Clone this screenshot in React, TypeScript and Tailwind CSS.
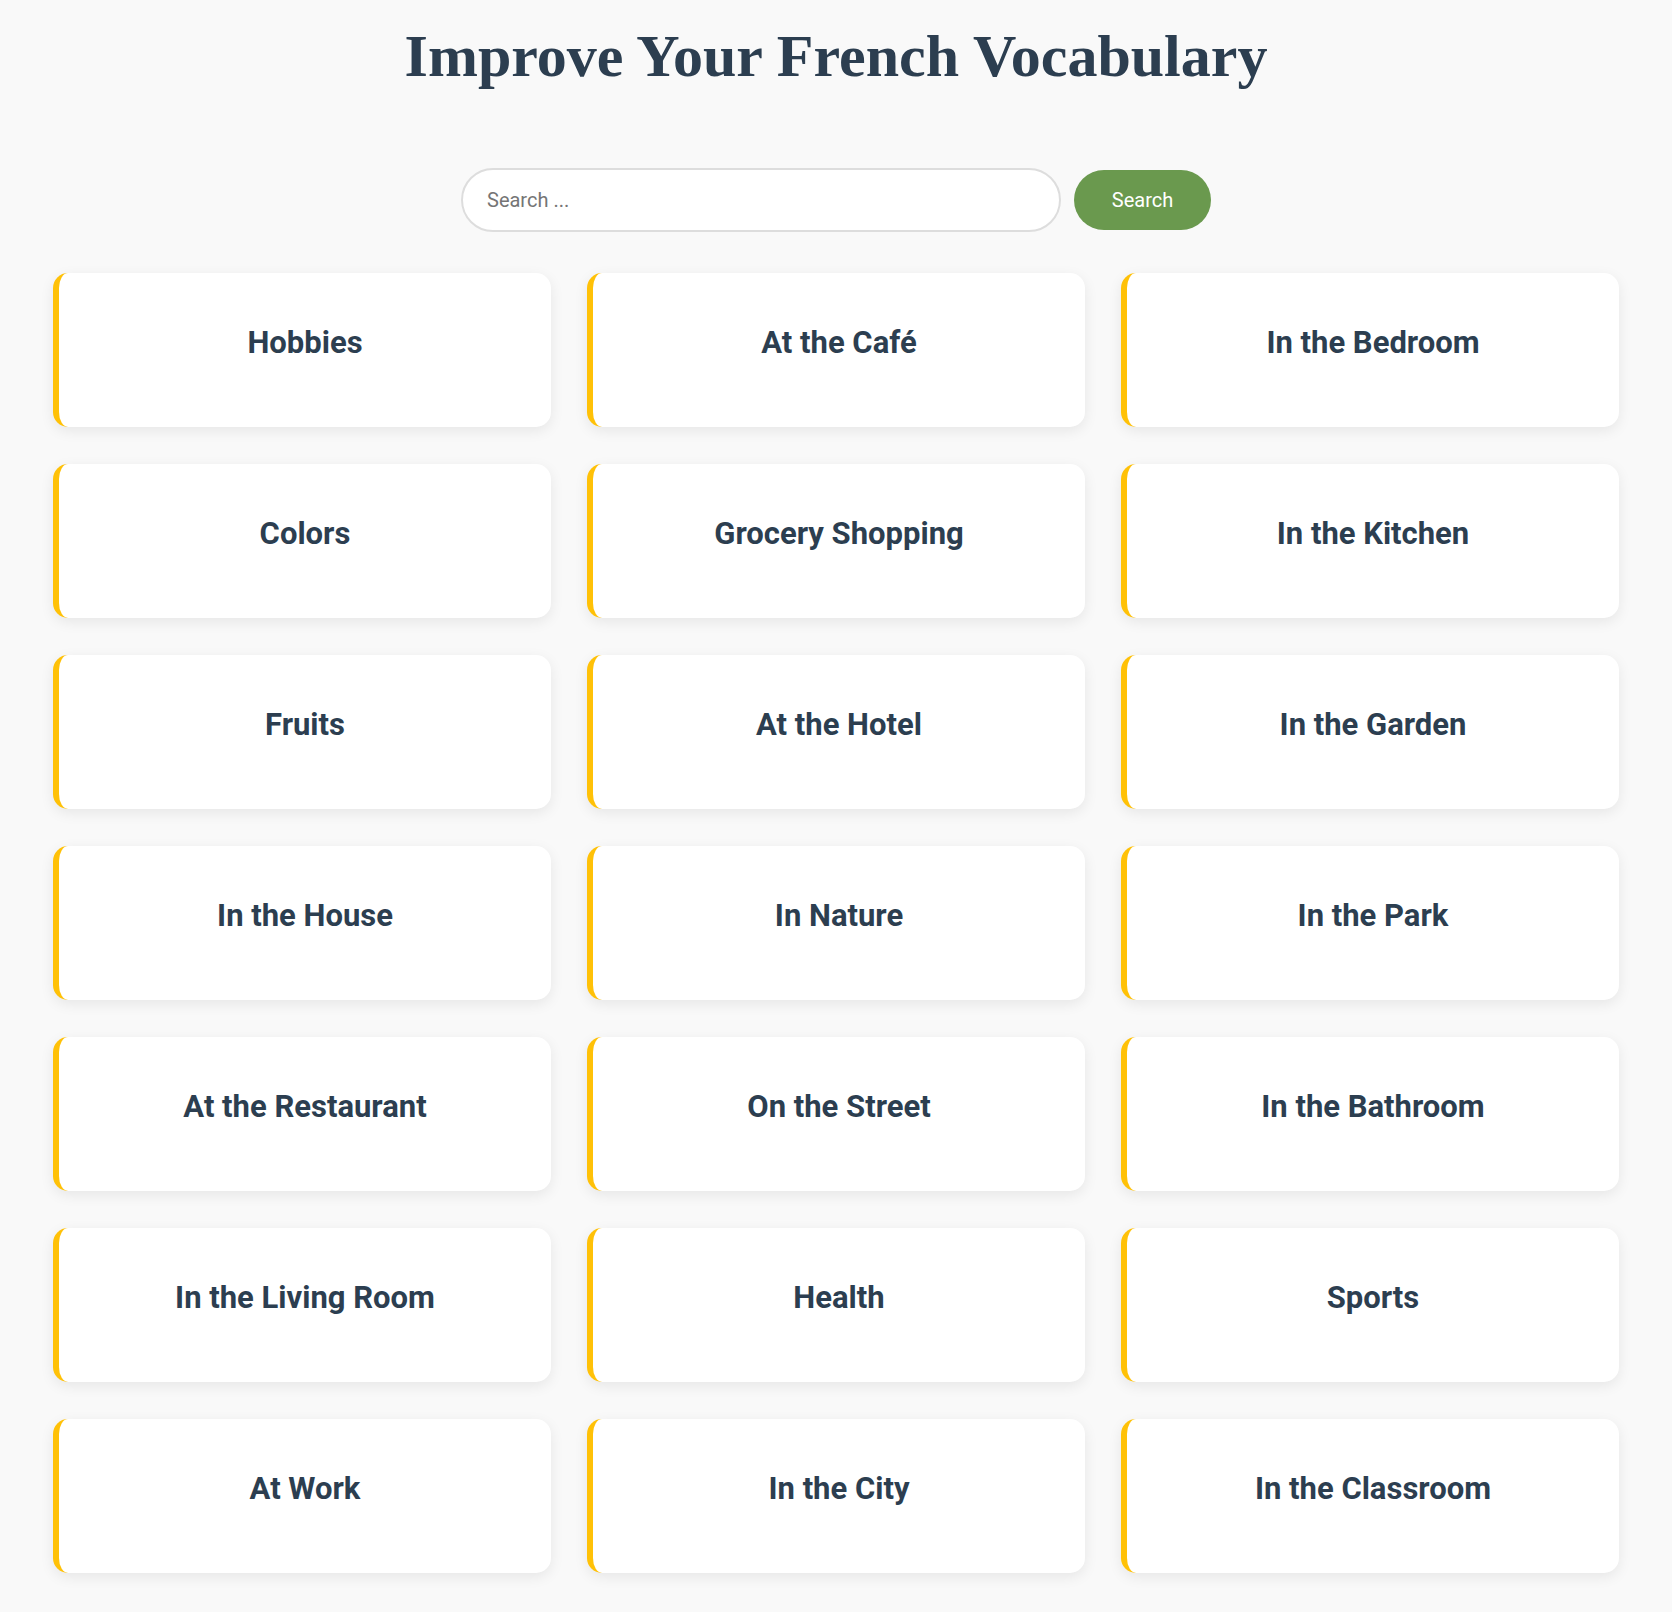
import React from 'react';

const topics: string[] = [
  'Hobbies',
  'At the Café',
  'In the Bedroom',
  'Colors',
  'Grocery Shopping',
  'In the Kitchen',
  'Fruits',
  'At the Hotel',
  'In the Garden',
  'In the House',
  'In Nature',
  'In the Park',
  'At the Restaurant',
  'On the Street',
  'In the Bathroom',
  'In the Living Room',
  'Health',
  'Sports',
  'At Work',
  'In the City',
  'In the Classroom',
];

const TopicCard: React.FC<{ title: string }> = ({ title }) => (
  <div className="h-[154px] bg-white rounded-[15px] border-l-[6px] border-[#ffc107] shadow-[0_4px_14px_rgba(0,0,0,0.08)] pt-[51px] text-center cursor-pointer">
    <h3 className="text-[31px] leading-[1.2] font-bold text-[#2c3e50] font-['Roboto',sans-serif]">
      {title}
    </h3>
  </div>
);

export default function App() {
  return (
    <div className="min-h-[1612px] bg-[#f9f9f9] pt-[26px] pb-[40px] font-['Roboto',sans-serif]">
      <h1 className="text-center text-[60px] leading-none font-bold text-[#2c3e50] font-['Liberation_Serif','Times_New_Roman',serif]">
        Improve Your French Vocabulary
      </h1>

      <div className="mt-[82px] flex items-center justify-center gap-[13px]">
        <input
          type="text"
          placeholder="Search ..."
          className="w-[600px] h-[64px] rounded-full border-2 border-[#ddd] bg-white px-[24px] text-[20px] text-[#333] placeholder:text-[#757575] outline-none"
        />
        <button className="w-[137px] h-[60px] rounded-full bg-[#6a994e] text-white text-[20px]">
          Search
        </button>
      </div>

      <div className="mt-[41px] mx-auto w-[1566px] grid grid-cols-3 gap-x-[36px] gap-y-[37px]">
        {topics.map((t) => (
          <TopicCard key={t} title={t} />
        ))}
      </div>
    </div>
  );
}
